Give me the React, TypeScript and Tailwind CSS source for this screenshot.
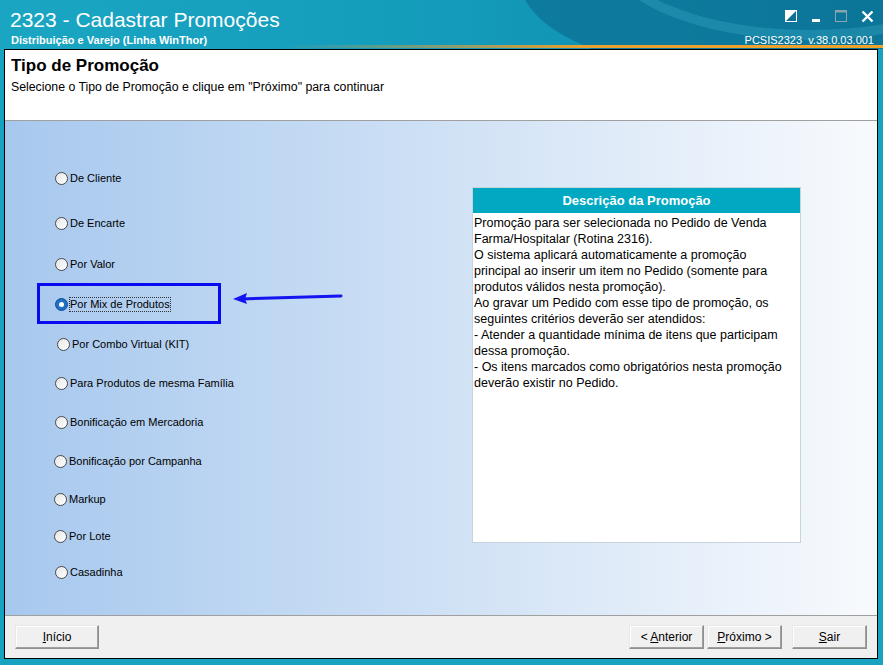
import React from 'react';

const sans = { fontFamily: '"Liberation Sans", Arial, sans-serif' };

interface RadioOption {
  label: string;
  mt: string;
  ml: string;
  checked?: boolean;
}

const options: RadioOption[] = [
  { label: 'De Cliente', mt: 'mt-[49px]', ml: 'ml-[50px]' },
  { label: 'De Encarte', mt: 'mt-[29px]', ml: 'ml-[50px]' },
  { label: 'Por Valor', mt: 'mt-[25px]', ml: 'ml-[50px]' },
  { label: 'Por Mix de Produtos', mt: 'mt-[24px]', ml: 'ml-[50px]', checked: true },
  { label: 'Por Combo Virtual (KIT)', mt: 'mt-[24px]', ml: 'ml-[52px]' },
  { label: 'Para Produtos de mesma Família', mt: 'mt-[23px]', ml: 'ml-[50px]' },
  { label: 'Bonificação em Mercadoria', mt: 'mt-[23px]', ml: 'ml-[50px]' },
  { label: 'Bonificação por Campanha', mt: 'mt-[23px]', ml: 'ml-[49px]' },
  { label: 'Markup', mt: 'mt-[22px]', ml: 'ml-[49px]' },
  { label: 'Por Lote', mt: 'mt-[21px]', ml: 'ml-[49px]' },
  { label: 'Casadinha', mt: 'mt-[20px]', ml: 'ml-[50px]' },
];

const description = [
  'Promoção para ser selecionada no Pedido de Venda',
  'Farma/Hospitalar (Rotina 2316).',
  'O sistema aplicará automaticamente a promoção',
  'principal ao inserir um item no Pedido (somente para',
  'produtos válidos nesta promoção).',
  'Ao gravar um Pedido com esse tipo de promoção, os',
  'seguintes critérios deverão ser atendidos:',
  '- Atender a quantidade mínima de itens que participam',
  'dessa promoção.',
  '- Os itens marcados como obrigatórios nesta promoção',
  'deverão existir no Pedido.',
];

const Radio = ({ checked }: { checked?: boolean }) =>
  checked ? (
    <span className="w-[13px] h-[13px] rounded-full bg-[#1f6fc5] border border-[#0d4f99] flex items-center justify-center shrink-0">
      <span className="w-[5px] h-[5px] rounded-full bg-white" />
    </span>
  ) : (
    <span className="w-[13px] h-[13px] rounded-full border border-[#4a4a4a] bg-gradient-to-br from-[#e6e6e6] to-white shrink-0" />
  );

const WinButton = ({ children, className }: { children: React.ReactNode; className?: string }) => (
  <button
    className={`h-[24px] bg-[#f0f0f0] border border-[#8f8f8f] border-t-[#e8e8e8] border-l-[#e8e8e8] shadow-[inset_-1px_-1px_0_#a0a0a0,inset_1px_1px_0_#ffffff] text-[12px] text-black ${className ?? ''}`}
    style={sans}
  >
    {children}
  </button>
);

export default function App() {
  return (
    <div className="w-[883px] h-[665px] bg-[#17a2bf] flex flex-col overflow-hidden" style={sans}>
      {/* title bar */}
      <div className="relative h-[49px] shrink-0 bg-gradient-to-r from-[#1aa6c3] via-[#149bbb] to-[#0e86a8] overflow-hidden">
        <div className="absolute -top-[120px] left-[520px] w-[520px] h-[200px] rounded-[50%] bg-[#0c6f93] opacity-70" />
        <div className="absolute -top-[150px] left-[600px] w-[420px] h-[190px] rounded-[50%] border-[10px] border-[#3fb2cc] opacity-30" />
        <div className="absolute bottom-[1px] left-[280px] right-0 h-[3px] bg-gradient-to-r from-transparent via-[#e8a030] to-[#f0a32a]" />
        <div className="relative flex justify-between">
          <div className="pl-[10px] pt-[8px]">
            <div className="text-white text-[21px] leading-[24px]">2323 - Cadastrar Promoções</div>
            <div className="text-white font-bold text-[11px] leading-[13px] mt-[2px] pl-[1px]">
              Distribuição e Varejo (Linha WinThor)
            </div>
          </div>
          <div className="flex flex-col items-end pr-[9px] pt-[9px]">
            <div className="flex items-center gap-[14px] h-[14px]">
              <svg width="12" height="12" viewBox="0 0 12 12">
                <rect x="0.5" y="0.5" width="11" height="11" fill="#fff" stroke="#fff" />
                <polygon points="1,11 11,1 11,11" fill="#0d6f92" />
              </svg>
              <svg width="10" height="12" viewBox="0 0 10 12">
                <rect x="1" y="9" width="8" height="3" fill="#fff" />
              </svg>
              <svg width="12" height="12" viewBox="0 0 12 12">
                <rect x="0.5" y="0.5" width="11" height="11" fill="none" stroke="#8aa4b0" />
                <rect x="0.5" y="0.5" width="11" height="2" fill="#8aa4b0" />
              </svg>
              <svg width="13" height="13" viewBox="0 0 13 13">
                <path d="M1.5 1.5 L11.5 11.5 M11.5 1.5 L1.5 11.5" stroke="#fff" strokeWidth="2.4" />
              </svg>
            </div>
            <div className="text-white text-[11px] leading-[14px] mt-[10px] whitespace-pre">PCSIS2323  v.38.0.03.001</div>
          </div>
        </div>
      </div>

      {/* body */}
      <div className="flex-1 flex pl-[4px] pr-[5px] pb-[6px]">
        <div className="flex-1 flex flex-col border border-black bg-white">
          {/* header */}
          <div className="h-[71px] shrink-0 bg-white border-b border-[#a0a0a0] pl-[6px] pt-[5px]">
            <div className="font-bold text-[17px] leading-[22px] text-black">Tipo de Promoção</div>
            <div className="text-[12.3px] leading-[16px] text-black mt-[2px]">
              Selecione o Tipo de Promoção e clique em "Próximo" para continuar
            </div>
          </div>

          {/* gradient panel */}
          <div className="relative flex-1 flex bg-gradient-to-r from-[#a7c8ee] via-[#cfe1f5] to-[#f8fafd] border-b border-[#a0a0a0]">
            <div className="w-[467px] flex flex-col">
              {options.map((o) => (
                <div key={o.label} className={`flex items-center h-[16px] ${o.mt} ${o.ml}`}>
                  <Radio checked={o.checked} />
                  <span
                    className={`ml-[2px] text-[11px] leading-[13px] text-black ${
                      o.checked ? 'outline outline-1 outline-dotted outline-[#333]' : ''
                    }`}
                  >
                    {o.label}
                  </span>
                </div>
              ))}
            </div>

            <div className="mt-[66px] w-[329px] h-[356px] flex flex-col border border-[#c9d3dd] bg-white">
              <div className="h-[25px] shrink-0 bg-[#00a8c2] text-white font-bold text-[13px] flex items-center justify-center">
                Descrição da Promoção
              </div>
              <div className="pl-[1px] pt-[2px] text-[12.5px] leading-[16px] text-black">
                {description.map((l) => (
                  <div key={l}>{l}</div>
                ))}
              </div>
            </div>

            {/* annotation */}
            <div className="absolute left-[32px] top-[162px] w-[184px] h-[41px] border-[3px] border-[#0a0af2]" />
            <svg className="absolute left-[226px] top-[170px]" width="112" height="14" viewBox="0 0 112 14">
              <line x1="110" y1="5" x2="10" y2="8" stroke="#1414f0" strokeWidth="3" strokeLinecap="round" />
              <polygon points="2,8 16,2 14,8 16,13" fill="#1414f0" />
            </svg>
          </div>

          {/* footer */}
          <div className="h-[42px] shrink-0 bg-[#f0f0f0] flex items-center pl-[10px] pr-[10px]">
            <WinButton className="w-[84px]">
              <u>I</u>nício
            </WinButton>
            <div className="flex-1" />
            <WinButton className="w-[75px]">
              &lt; <u>A</u>nterior
            </WinButton>
            <WinButton className="w-[75px] ml-[3px]">
              <u>P</u>róximo &gt;
            </WinButton>
            <WinButton className="w-[75px] ml-[10px]">
              <u>S</u>air
            </WinButton>
          </div>
        </div>
      </div>
    </div>
  );
}
